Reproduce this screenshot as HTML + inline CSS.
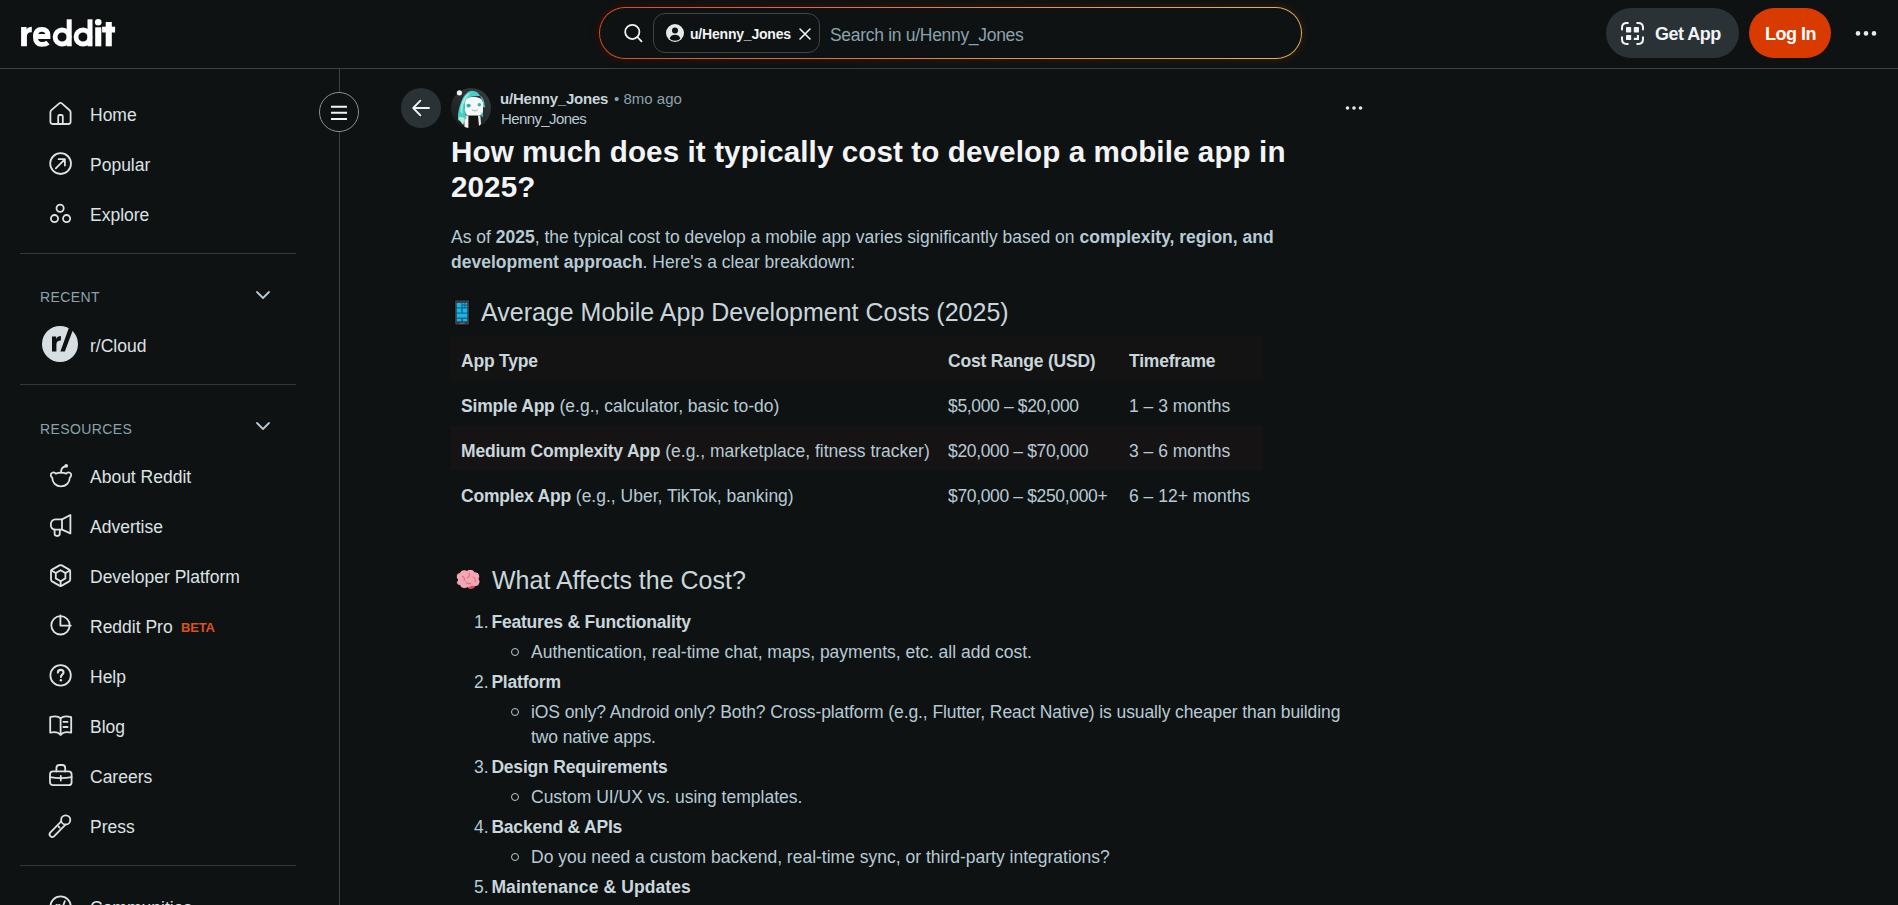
<!DOCTYPE html>
<html><head><meta charset="utf-8">
<style>
*{margin:0;padding:0;box-sizing:border-box}
html,body{width:1898px;height:905px;overflow:hidden;background:#0e1213;font-family:"Liberation Sans",sans-serif;color:#b7cad4}
.a{position:absolute;white-space:nowrap}
.ic{position:absolute;overflow:visible}
.hdr-line{position:absolute;left:0;top:68px;width:1898px;height:1px;background:#3b4043}
.side-line{position:absolute;left:339px;top:69px;width:1px;height:836px;background:#3b4043}
.div{position:absolute;left:20px;width:276px;height:1px;background:#33383b}
.nav{font-size:17.5px;color:#dde2e4;line-height:20px}
.sec{font-size:14px;letter-spacing:0.4px;color:#8ba2ad;line-height:16px}
.tb{font-size:17.5px;line-height:25px;color:#b7cad4}
.tb b,.li b{color:#c9d6dc;letter-spacing:-0.2px}
.num{letter-spacing:-0.35px}
.li{font-size:17.5px;line-height:25px;color:#b7cad4}
.bul{width:8px;height:8px;border:1.3px solid #b7cad4;border-radius:50%}
.si{fill:none;stroke:#dde2e4;stroke-width:1.8;stroke-linejoin:round;stroke-linecap:round}
</style></head><body>
<svg class="ic" style="left:0;top:0" width="130" height="60" viewBox="0 0 130 60">
 <g fill="#fff">
  <path d="M21.1 46.3 V26.9 H26.6 V29.4 C27.6 27.6 29.4 26.7 31.8 26.7 V32.2 C28.4 32.2 26.9 33.6 26.9 37 V46.3 Z"/>
  <rect x="66.7" y="19.3" width="5" height="27"/>
  <rect x="87.5" y="19.3" width="5" height="27"/>
  <rect x="95.2" y="27.3" width="6.1" height="19"/>
  <circle cx="98.25" cy="22.3" r="3.3"/>
  <rect x="105.7" y="22" width="6.1" height="24.3"/>
  <rect x="102.1" y="26.7" width="13" height="5.8"/>
 </g>
 <g fill="none" stroke="#fff" stroke-width="4.8">
  <circle cx="62.1" cy="37" r="7"/>
  <circle cx="83" cy="37" r="7"/>
  <path d="M48 42.6 Q46 44.4 41.9 44.4 Q35.4 44.4 35.4 36.8 Q35.4 29.4 41.8 29.4 Q48 29.4 48 35.6 V36.5 H36"/>
 </g>
</svg>
<div class="hdr-line"></div>
<div class="side-line"></div>
<!-- search -->
<div class="a" style="left:597px;top:5px;width:707px;height:56px;border-radius:28px;background:linear-gradient(90deg,#2c0e06,#2a1a0a);filter:blur(3px)"></div>
<div class="a" style="left:599px;top:7px;width:703px;height:52px;border-radius:26px;background:linear-gradient(90deg,#c9532a 0%,#d8743c 35%,#dca050 70%,#d8b45e 100%);padding:1.3px">
  <div style="width:100%;height:100%;border-radius:25px;background:#0e1213;box-shadow:inset 0 0 1.5px #3a1005"></div>
</div>
<svg class="ic" style="left:621px;top:22px" width="24" height="24" viewBox="0 0 24 24" fill="none" stroke="#f2f4f5" stroke-width="1.75" stroke-linecap="round">
 <circle cx="11.3" cy="9.9" r="7.1"/><path d="M16.4 15 L20.5 19.3"/>
</svg>
<div class="a" style="left:653px;top:13px;width:167px;height:40px;border-radius:12px;border:1px solid #3e4447"></div>
<svg class="ic" style="left:665px;top:23px" width="20" height="20" viewBox="0 0 20 20">
 <circle cx="10" cy="10" r="9" fill="#e4e9eb"/>
 <circle cx="10" cy="7.6" r="3" fill="#0e1113"/>
 <path d="M4.6 15.6 C5.6 12.8 7.6 11.8 10 11.8 C12.4 11.8 14.4 12.8 15.4 15.6 C14 17 12.2 17.8 10 17.8 C7.8 17.8 6 17 4.6 15.6 Z" fill="#0e1113"/>
</svg>
<div class="a" style="left:690px;top:26px;font-size:14px;font-weight:bold;color:#f2f4f5;line-height:17px;letter-spacing:-0.2px">u/Henny_Jones</div>
<svg class="ic" style="left:797px;top:26px" width="16" height="16" viewBox="0 0 16 16" fill="none" stroke="#f2f4f5" stroke-width="1.6" stroke-linecap="round"><path d="M3 3 L13 13 M13 3 L3 13"/></svg>
<div class="a" style="left:830px;top:25px;font-size:17.5px;color:#8ba2ad;line-height:20px;letter-spacing:-0.3px">Search in u/Henny_Jones</div>

<!-- get app -->
<div class="a" style="left:1606px;top:8px;width:133px;height:50px;border-radius:25px;background:#2a3236"></div>
<svg class="ic" style="left:1619px;top:21px" width="26" height="26" viewBox="0 0 26 26" fill="none" stroke="#f2f4f5" stroke-width="2" stroke-linecap="round">
 <path d="M3 8.6 V6.6 Q3 1.9 7.7 1.9 H8.8 M18.2 1.9 H19.3 Q24 1.9 24 6.6 V8.6 M24 16.2 V18.2 Q24 22.9 19.3 22.9 H18.2 M8.8 22.9 H7.7 Q3 22.9 3 18.2 V16.2"/>
 <g fill="#f2f4f5" stroke="none"><rect x="7" y="6" width="5.2" height="5.5" rx="0.7"/><rect x="14.8" y="6" width="5.2" height="5.5" rx="0.7"/><rect x="7" y="13.9" width="5.2" height="5.2" rx="0.7"/><path d="M17.9 13.9 H20 V19.1 H14.8 V16.8 H17.9 Z"/></g>
</svg>
<div class="a" style="left:1655px;top:24px;font-size:18px;font-weight:bold;color:#f2f4f5;line-height:20px;letter-spacing:-0.5px">Get App</div>
<!-- log in -->
<div class="a" style="left:1749px;top:8px;width:82px;height:50px;border-radius:25px;background:#d93a00"></div>
<div class="a" style="left:1765px;top:24px;font-size:18px;font-weight:bold;color:#ffffff;line-height:20px;letter-spacing:-0.5px">Log In</div>
<!-- dots -->
<svg class="ic" style="left:1854px;top:29px" width="24" height="9" viewBox="0 0 24 9" fill="#e4e9eb"><circle cx="4" cy="4.4" r="2.3"/><circle cx="12" cy="4.4" r="2.3"/><circle cx="20" cy="4.4" r="2.3"/></svg>
<!-- sidebar nav -->
<div class="a nav" style="left:90px;top:105px">Home</div>
<div class="a nav" style="left:90px;top:155px">Popular</div>
<div class="a nav" style="left:90px;top:205px">Explore</div>
<div class="div" style="top:253px"></div>
<div class="a sec" style="left:40px;top:289px">RECENT</div>
<div class="a nav" style="left:90px;top:336px">r/Cloud</div>
<div class="div" style="top:384px"></div>
<div class="a sec" style="left:40px;top:421px">RESOURCES</div>
<div class="a nav" style="left:90px;top:467px">About Reddit</div>
<div class="a nav" style="left:90px;top:517px">Advertise</div>
<div class="a nav" style="left:90px;top:567px">Developer Platform</div>
<div class="a nav" style="left:90px;top:617px">Reddit Pro</div>
<div class="a" style="left:181px;top:620px;font-size:13px;font-weight:bold;color:#d9531e;line-height:16px;letter-spacing:-0.2px">BETA</div>
<div class="a nav" style="left:90px;top:667px">Help</div>
<div class="a nav" style="left:90px;top:717px">Blog</div>
<div class="a nav" style="left:90px;top:767px">Careers</div>
<div class="a nav" style="left:90px;top:817px">Press</div>
<div class="div" style="top:865px"></div>
<div class="a nav" style="left:90px;top:898px">Communities</div>

<svg class="ic si" style="left:48px;top:101px" width="25" height="25" viewBox="0 0 25 25">
 <path d="M11.2 2.4 Q12.5 1.3 13.8 2.4 L21.6 9.2 Q22.6 10.1 22.6 11.4 V20.8 Q22.6 23 20.4 23 H4.6 Q2.4 23 2.4 20.8 V11.4 Q2.4 10.1 3.4 9.2 Z"/>
 <path d="M10.2 23 V15.4 Q10.2 14 11.6 14 H13.4 Q14.8 14 14.8 15.4 V23"/>
</svg>
<svg class="ic si" style="left:48px;top:151px" width="25" height="25" viewBox="0 0 25 25">
 <circle cx="12.6" cy="12.6" r="10.4"/>
 <path d="M7.8 17.4 L16.8 8.4 M10.6 8.2 H16.9 V14.5"/>
</svg>
<svg class="ic si" style="left:48px;top:200px" width="25" height="25" viewBox="0 0 25 25">
 <circle cx="12.1" cy="8.2" r="3.6"/><circle cx="6.5" cy="18.6" r="3.6"/><circle cx="18.6" cy="18.6" r="3.6"/>
</svg>
<svg class="ic" style="left:254px;top:288px" width="18" height="14" viewBox="0 0 18 14" fill="none" stroke="#b7cad4" stroke-width="1.8" stroke-linecap="round" stroke-linejoin="round"><path d="M3 4 L9 10 L15 4"/></svg>
<svg class="ic" style="left:254px;top:419px" width="18" height="14" viewBox="0 0 18 14" fill="none" stroke="#b7cad4" stroke-width="1.8" stroke-linecap="round" stroke-linejoin="round"><path d="M3 4 L9 10 L15 4"/></svg>
<svg class="ic" style="left:42px;top:326px" width="36" height="36" viewBox="0 0 36 36">
 <circle cx="18" cy="18" r="18" fill="#d7dfe2"/>
 <path d="M10 25.4 V10.4 H14.2 V12.9 C15 11 16.6 9.9 18.9 9.9 V14.5 C15.8 14.5 14.4 15.9 14.4 18.7 V25.4 Z" fill="#0e1213"/>
 <path d="M18.4 25.4 L27 1.6 H31.8 L22.8 25.4 Z" fill="#0e1213"/>
</svg>
<!-- snoo -->
<svg class="ic si" style="left:48px;top:463px" width="26" height="26" viewBox="0 0 26 26">
 <path d="M4.2 14.6 C2.4 13.6 2.2 10.8 4.2 9.8 C5.6 9.1 7 9.6 7.8 10.6 C9.4 10 11 9.7 13 9.7 C15 9.7 16.6 10 18.2 10.6 C19 9.6 20.4 9.1 21.8 9.8 C23.8 10.8 23.6 13.6 21.8 14.6 C21.8 20 17.8 23.4 13 23.4 C8.2 23.4 4.2 20 4.2 14.6 Z"/>
 <path d="M13 9.7 C13 6.4 14.6 4 17.2 3.4"/>
 <circle cx="18.2" cy="2.8" r="1.9" fill="#dde2e4" stroke="none"/>
</svg>
<!-- megaphone -->
<svg class="ic si" style="left:48px;top:513px" width="26" height="26" viewBox="0 0 26 26">
 <path d="M14 6.4 L22.4 2 V20.4 L14 16.6 Z"/>
 <path d="M14 6.4 H7.6 C4.6 6.4 2.8 8.4 2.8 11.5 C2.8 14.6 4.6 16.6 7.6 16.6 H14"/>
 <path d="M6.6 16.6 V20.6 C6.6 22 7.6 23 9.2 23 C10.8 23 11.8 22 11.8 20.6 V16.6"/>
</svg>
<!-- dev platform -->
<svg class="ic si" style="left:48px;top:563px" width="26" height="26" viewBox="0 0 26 26">
 <path d="M11.4 2.4 Q12.6 1.7 13.8 2.4 L21.2 6.6 Q22.2 7.2 22.2 8.4 V16.6 Q22.2 17.8 21.2 18.4 L13.8 22.6 Q12.6 23.3 11.4 22.6 L4 18.4 Q3 17.8 3 16.6 V8.4 Q3 7.2 4 6.6 Z"/>
 <path d="M12.6 7.2 L17.4 10 V15.4 L12.6 18.2 L7.8 15.4 V10 Z"/>
 <path d="M12.6 18.2 V23 M17.4 10 L21.8 7.4 M7.8 10 L3.4 7.4"/>
</svg>
<!-- pro pie -->
<svg class="ic si" style="left:48px;top:613px" width="26" height="26" viewBox="0 0 26 26">
 <circle cx="12.5" cy="12.3" r="9.2"/>
 <path d="M12.4 2.4 V12.6 H22.8"/>
</svg>
<!-- help -->
<svg class="ic si" style="left:48px;top:663px" width="26" height="26" viewBox="0 0 26 26">
 <circle cx="12.6" cy="12.4" r="10.2"/>
 <path d="M9.9 9.6 C9.9 7.8 11.1 6.9 12.7 6.9 C14.3 6.9 15.5 7.9 15.5 9.4 C15.5 11.4 12.9 11.6 12.9 14" stroke-width="2.1"/>
 <circle cx="12.9" cy="17.2" r="1.2" fill="#dde2e4" stroke="none"/>
</svg>
<!-- blog -->
<svg class="ic si" style="left:48px;top:713px" width="26" height="26" viewBox="0 0 26 26">
 <path d="M12.6 5.2 C10.4 3.4 6.4 3 2.2 4.2 V19.6 C6.4 18.6 10.4 19.2 12.6 21.8 C14.8 19.2 18.8 18.6 23.2 19.6 V4.2 C18.8 3 14.8 3.4 12.6 5.2 Z"/>
 <path d="M12.6 5.2 V21.6"/>
 <path d="M15.4 8.8 H19.6 M15.4 14 H19.6"/>
</svg>
<!-- careers -->
<svg class="ic si" style="left:48px;top:763px" width="26" height="26" viewBox="0 0 26 26">
 <rect x="2" y="8.4" width="21.6" height="13.8" rx="3"/>
 <path d="M8.4 8.4 V5 Q8.4 2 11.4 2 H14.2 Q17.2 2 17.2 5 V8.4"/>
 <path d="M2 14.2 Q12.8 16.2 23.6 14.2 M12.8 12.8 V17.6"/>
</svg>
<!-- press -->
<svg class="ic si" style="left:48px;top:813px" width="26" height="26" viewBox="0 0 26 26">
 <circle cx="17.7" cy="6.9" r="4.6"/>
 <path d="M13.2 8.4 L2.2 19.6 A2.7 2.7 0 0 0 6 23.4 L17 12.2"/>
 <path d="M10.4 13.4 L11.6 14.6"/>
</svg>
<svg class="ic si" style="left:48px;top:894px" width="26" height="26" viewBox="0 0 26 26"><circle cx="12.6" cy="12.6" r="10.2"/><path d="M8.4 18 V11 M8.4 13 Q9.6 11 11.6 11 M16.8 7.2 L12.8 18"/></svg>
<!-- hamburger -->
<div class="a" style="left:319px;top:92px;width:40px;height:40px;border-radius:50%;border:1px solid #8a9094;background:#0e1213"></div>
<svg class="ic" style="left:329px;top:102px" width="20" height="20" viewBox="0 0 20 20" stroke="#f2f4f5" stroke-width="2"><path d="M2 4.7 H18 M2 10.7 H18 M2 17 H18"/></svg>
<!-- back -->
<div class="a" style="left:401px;top:88px;width:40px;height:40px;border-radius:50%;background:#2a3236"></div>
<svg class="ic" style="left:411px;top:98px" width="20" height="20" viewBox="0 0 20 20" fill="none" stroke="#f2f4f5" stroke-width="1.8" stroke-linecap="round" stroke-linejoin="round"><path d="M2.2 10 H18 M9.4 2.6 L2.2 10 L9.4 17.4"/></svg>
<!-- avatar -->
<svg class="ic" style="left:451px;top:88px" width="40" height="40" viewBox="0 0 40 40">
 <defs><linearGradient id="ag" x1="0.8" y1="0.1" x2="0.2" y2="0.9"><stop offset="0" stop-color="#34393d"/><stop offset="1" stop-color="#1b1e20"/></linearGradient>
 <clipPath id="ac"><circle cx="20" cy="20" r="20"/></clipPath></defs>
 <circle cx="20" cy="20" r="20" fill="url(#ag)"/>
 <g clip-path="url(#ac)">
  <path d="M17.6 28 H29 L29.6 40 H17 Z" fill="#141414"/>
  <path d="M13 27.5 H17.4 L17.4 40 H13.6 Z" fill="#f2f4f4"/>
  <path d="M27 27.5 H29.4 L30 36 L28 38 Z" fill="#e8eeee"/>
  <path d="M14 13 C14 10 16.5 9 22 9 C29 9 32 11 32 16 V23 C32 26.5 30 27.6 26 27.6 H19 C15.5 27.6 14 26 14 22 Z" fill="#f6f8f8"/>
  <path d="M7 32 C6.5 26 8 19 10.5 13 C13 7 16.5 3 21 2.8 C25 3 28 5 29 8 C26 8 22 8 19 9 C16 10 14.5 12 14 15 C13.6 19 14 24 15.5 30 L11 34 Z" fill="#47cdc8"/>
  <path d="M9.6 24 C9 20 10.5 14 13 10 C15 7 17.5 5 20 4.5 C17.5 7 14.5 11 12.6 16 C11.6 19 11.2 22 11.8 26 Z" fill="#9fe8e0"/>
  <path d="M7.5 30 C9 33 10.5 35.5 12.5 37 L13.5 30 C11.5 29 9 28.5 7.5 30 Z" fill="#b8ecd0"/>
  <path d="M28.8 7.6 C31.6 9 33.6 13 33.6 17 L34.4 19.6 L32 19 V13 Z" fill="#47cdc8"/>
  <path d="M31 24 C32 26 32.4 28 31.4 29.4 L30 27 Z" fill="#47cdc8"/>
  <ellipse cx="17.6" cy="17.6" rx="2.2" ry="1.9" fill="#2bb3ab"/>
  <ellipse cx="28.3" cy="16.8" rx="1.7" ry="1.8" fill="#2bb3ab"/>
  <path d="M20.8 21.6 C22.4 23.2 25 23.2 26.6 21.6" stroke="#9aa0a0" stroke-width="0.9" fill="none"/>
 </g>
 <circle cx="8.4" cy="4.8" r="2.6" fill="#f0f2f2"/>
</svg>
<div class="a" style="left:500px;top:90px;font-size:15px;line-height:17px;color:#b7cad4"><b style="color:#c9d6dc;letter-spacing:-0.2px">u/Henny_Jones</b> <span style="color:#8ba2ad;margin-left:1.6px">• 8mo ago</span></div>
<div class="a" style="left:501px;top:110px;font-size:15px;line-height:17px;color:#b7cad4;letter-spacing:-0.6px">Henny_Jones</div>
<svg class="ic" style="left:1343px;top:103px" width="22" height="10" viewBox="0 0 22 10" fill="#e4e9eb"><circle cx="4.5" cy="5" r="1.8"/><circle cx="11" cy="5" r="1.8"/><circle cx="17.5" cy="5" r="1.8"/></svg>
<!-- title -->
<div class="a" style="left:451px;top:134px;font-size:29.6px;font-weight:bold;line-height:35px;color:#f2f4f5;letter-spacing:0.1px">How much does it typically cost to develop a mobile app in<br>2025?</div>
<!-- paragraph -->
<div class="a" style="left:451px;top:225px;font-size:17.5px;line-height:25px;color:#b7cad4">As of <b>2025</b>, the typical cost to develop a mobile app varies significantly based on <b>complexity, region, and</b><br><b>development approach</b>. Here's a clear breakdown:</div>
<!-- h2 1 -->
<svg class="ic" style="left:453px;top:299px" width="18" height="27" viewBox="0 0 18 27">
 <rect x="1" y="0.4" width="16" height="26.2" rx="1.6" fill="#0a0a0a"/>
 <rect x="2" y="1.2" width="14" height="24.6" rx="1" fill="#3b3d40"/>
 <rect x="3.6" y="3.6" width="10.8" height="19" fill="#0e5a78"/>
 <g fill="#19b4ea">
  <rect x="3.8" y="4" width="4.6" height="4.4"/><rect x="9.4" y="4" width="2" height="1.6"/><rect x="12.2" y="4" width="2" height="1.6"/><rect x="9.4" y="6.6" width="2" height="1.6"/><rect x="12.2" y="6.6" width="2" height="1.6"/>
  <rect x="3.8" y="9.4" width="4.6" height="4.2"/><rect x="9.6" y="9.4" width="4.6" height="4.2"/>
  <rect x="3.8" y="14.6" width="10.4" height="4"/>
  <rect x="3.8" y="19.8" width="4.4" height="2.4"/><rect x="9.8" y="19.8" width="4.4" height="2.4"/>
 </g>
 <rect x="6.5" y="23.8" width="5" height="0.9" fill="#777"/>
</svg>
<div class="a" style="left:481px;top:298px;font-size:25px;line-height:28px;color:#c9d6dc">Average Mobile App Development Costs (2025)</div>
<!-- table -->
<div class="a" style="left:451px;top:336px;width:812px;height:45px;background:#141313"></div>
<div class="a" style="left:451px;top:426px;width:812px;height:44px;background:#151313"></div>
<div class="a tb" style="left:461px;top:349px"><b>App Type</b></div>
<div class="a tb" style="left:948px;top:349px"><b>Cost Range (USD)</b></div>
<div class="a tb" style="left:1129px;top:349px"><b>Timeframe</b></div>
<div class="a tb" style="left:461px;top:394px"><b>Simple App</b> (e.g., calculator, basic to-do)</div>
<div class="a tb" style="left:948px;top:394px"><span class="num">$5,000 – $20,000</span></div>
<div class="a tb" style="left:1129px;top:394px">1 – 3 months</div>
<div class="a tb" style="left:461px;top:439px"><b>Medium Complexity App</b> (e.g., marketplace, fitness tracker)</div>
<div class="a tb" style="left:948px;top:439px"><span class="num">$20,000 – $70,000</span></div>
<div class="a tb" style="left:1129px;top:439px">3 – 6 months</div>
<div class="a tb" style="left:461px;top:484px"><b>Complex App</b> (e.g., Uber, TikTok, banking)</div>
<div class="a tb" style="left:948px;top:484px"><span class="num">$70,000 – $250,000+</span></div>
<div class="a tb" style="left:1129px;top:484px">6 – 12+ months</div>
<!-- h2 2 -->
<svg class="ic" style="left:454px;top:568px" width="28" height="24" viewBox="0 0 28 24">
 <path d="M4 12 C1 10 2 5 6 4.5 C7 1.5 11 1 13 2.5 C15 0.5 19.5 1 20.5 3.8 C24.5 3.5 27 7.5 25 11 C27.5 14 25 19 21 18.5 C19.5 21.5 15 22 13.5 19.5 C11 21.5 6.5 20.5 6 17.5 C2.5 17.5 1.5 13.5 4 12 Z" fill="#f4a6b5" stroke="#0a0a0a" stroke-width="1"/>
 <path d="M8 8 C10 9 11 11 10 13 M15 5 C16 7 15 9 13 10 M19 9 C21 10 22 12 21 14 M12 14 C13 16 15 16 17 15" stroke="#d9707f" stroke-width="1.1" fill="none"/>
 <path d="M14 19.5 C16 21.5 19 21 21 18.5 C20 17 17 17.5 14 19.5 Z" fill="#e0485a"/>
</svg>
<div class="a" style="left:492px;top:566px;font-size:25px;line-height:28px;color:#c9d6dc">What Affects the Cost?</div>
<!-- list -->
<div class="a li" style="left:474px;top:610px"><span style="display:inline-block;width:17.4px">1.</span><b>Features &amp; Functionality</b></div>
<div class="a bul" style="left:511px;top:648px"></div><div class="a li" style="left:531px;top:640px">Authentication, real-time chat, maps, payments, etc. all add cost.</div>
<div class="a li" style="left:474px;top:670px"><span style="display:inline-block;width:17.4px">2.</span><b>Platform</b></div>
<div class="a bul" style="left:511px;top:708px"></div><div class="a li" style="left:531px;top:700px;letter-spacing:-0.1px">iOS only? Android only? Both? Cross-platform (e.g., Flutter, React Native) is usually cheaper than building<br>two native apps.</div>
<div class="a li" style="left:474px;top:755px"><span style="display:inline-block;width:17.4px">3.</span><b>Design Requirements</b></div>
<div class="a bul" style="left:511px;top:793px"></div><div class="a li" style="left:531px;top:785px">Custom UI/UX vs. using templates.</div>
<div class="a li" style="left:474px;top:815px"><span style="display:inline-block;width:17.4px">4.</span><b>Backend &amp; APIs</b></div>
<div class="a bul" style="left:511px;top:853px"></div><div class="a li" style="left:531px;top:845px">Do you need a custom backend, real-time sync, or third-party integrations?</div>
<div class="a li" style="left:474px;top:875px"><span style="display:inline-block;width:17.4px">5.</span><b style="letter-spacing:0.1px">Maintenance &amp; Updates</b></div>
</body></html>
